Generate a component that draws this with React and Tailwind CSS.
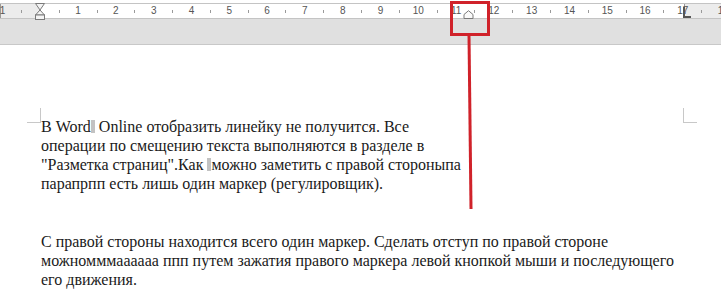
import React from "react";

const cells = Array.from({ length: 20 }, (_, k) => (k === 0 ? "1" : k === 1 ? "" : k === 19 ? "1" : String(k - 1)));

function Hourglass() {
  return (
    <svg width="12" height="17" viewBox="0 0 12 17" className="shrink-0">
      <path d="M1.5 0.5 H10.5 L6 7 Z" fill="#f4f4f4" stroke="#7a7a7a" />
      <path d="M6 7 L10.5 12 H1.5 Z" fill="#f4f4f4" stroke="#7a7a7a" />
      <rect x="1.5" y="12" width="9" height="4.5" fill="#f4f4f4" stroke="#7a7a7a" />
    </svg>
  );
}

function Ruler() {
  return (
    <div className="relative mt-[3px] h-[16px]">
      {/* background sections */}
      <div className="flex h-full border-y border-[#c4c4c4]">
        <div className="w-[40px] bg-[#ececec] border-l border-[#9a9a9a]" />
        <div className="w-[644px] bg-white" />
        <div className="flex-1 bg-[#ececec] border-l border-[#9a9a9a]" />
      </div>
      {/* scale */}
      <div
        className="absolute inset-0 flex items-center ml-[-15.9px] text-[10px] leading-[12px] text-[#555]"
        style={{ fontFamily: '"Liberation Sans", Arial, sans-serif' }}
      >
        {cells.map((n, k) => (
          <div key={k} className="flex w-[37.8px] shrink-0 items-center">
            <span className="flex flex-1 justify-center">{k === 1 ? <Hourglass /> : n}</span>
            <span className="h-[3px] w-px bg-[#9a9a9a]" />
          </div>
        ))}
      </div>
      {/* right indent marker */}
      <svg className="absolute left-[463px] top-[7px]" width="11" height="9" viewBox="0 0 11 9">
        <path d="M1 8.5 V4.5 L5.5 0.7 L10 4.5 V8.5 Z" fill="#fafafa" stroke="#7a7a7a" />
      </svg>
      {/* right margin marker */}
      <svg className="absolute left-[683px] top-[4px]" width="9" height="12" viewBox="0 0 9 12">
        <path d="M1 0 V10 H8" fill="none" stroke="#555" strokeWidth="2" />
      </svg>
    </div>
  );
}

const Bar = () => <span className="inline-block w-[4px] h-[13px] bg-[#c2c2c2] align-[-1px]" />;

const Corner = ({ right }) => (
  <div className={`w-[14px] h-[15px] border-b border-[#c8c8c8] ${right ? "border-l" : "border-r"}`} />
);

export default function App() {
  return (
    <div
      className="relative w-[721px] h-[307px] overflow-hidden bg-white"
      style={{ fontFamily: '"Liberation Serif", "Times New Roman", serif' }}
    >
      <div className="h-[42px] bg-[#e0e0e0] border-b border-[#c8c8c8]">
        <Ruler />
      </div>
      <div className="pt-[63px]">
        <div className="flex justify-between pl-[27px] pr-[24px]">
          <Corner />
          <Corner right />
        </div>
        <div className="mt-[-6px] pl-[41px] text-[16px] leading-[19px] text-[#1a1a1a] whitespace-nowrap">
          <p>
            В Word<Bar /> Online отобразить линейку не получится. Все
            <br />
            операции по смещению текста выполняются в разделе в
            <br />
            "Разметка страниц".Как <Bar />можно заметить с правой стороныпа
            <br />
            парапрпп есть лишь один маркер (регулировщик).
          </p>
          <p className="mt-[39px]">
            С правой стороны находится всего один маркер. Сделать отступ по правой стороне
            <br />
            можномммаааааа ппп путем зажатия правого маркера левой кнопкой мыши и последующего
            <br />
            его движения.
          </p>
        </div>
      </div>
      {/* red annotation */}
      <div className="absolute left-[450px] top-[1px] w-[40px] h-[35px] border-[3px] border-[#d0222a]" />
      <svg className="absolute left-0 top-0 pointer-events-none" width="721" height="307" viewBox="0 0 721 307">
        <line x1="469" y1="35" x2="471" y2="209" stroke="#d0222a" strokeWidth="3" />
      </svg>
    </div>
  );
}
